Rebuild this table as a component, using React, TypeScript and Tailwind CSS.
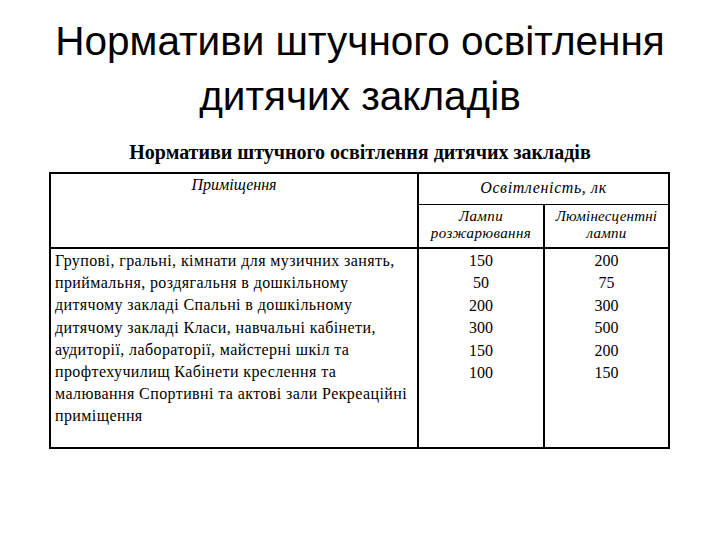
import React from 'react'

const rows = [
  ['150', '200'],
  ['50', '75'],
  ['200', '300'],
  ['300', '500'],
  ['150', '200'],
  ['100', '150'],
]

const lines = [
  'Групові, гральні, кімнати для музичних занять,',
  'приймальня, роздягальня в дошкільному',
  'дитячому закладі Спальні в дошкільному',
  'дитячому закладі Класи, навчальні кабінети,',
  'аудиторії, лабораторії, майстерні шкіл та',
  'профтехучилищ Кабінети креслення та',
  'малювання Спортивні та актові зали Рекреаційні',
  'приміщення',
]

export default function App() {
  return (
    <div className="relative h-[540px] w-[720px] overflow-hidden bg-white text-black">
      <h1 className="pt-[14px] text-center font-['Liberation_Sans',Arial,sans-serif] text-[40.5px] leading-[55px]">
        Нормативи штучного освітлення
        <br />
        дитячих закладів
      </h1>

      <div className="mt-[16px] text-center font-['Liberation_Serif','Times_New_Roman',serif] text-[20px] font-bold leading-[24px]">
        Нормативи штучного освітлення дитячих закладів
      </div>

      <div className="ml-[49px] mt-[8px] grid w-[621px] grid-cols-[368px_126px_1fr] grid-rows-[31px_42px_200px] border-2 border-black font-['Liberation_Serif','Times_New_Roman',serif] italic">
        <div className="row-span-2 border-r-2 border-black pt-[1px] text-center text-[16px] leading-[20px]">
          Приміщення
        </div>
        <div className="col-span-2 border-b border-black pt-[4px] text-center text-[16px] leading-[20px] tracking-[0.6px]">
          Освітленість, лк
        </div>
        <div className="border-r-2 border-black pt-[3px] text-center text-[15px] leading-[17px] tracking-[0.4px]">
          Лампи
          <br />
          розжарювання
        </div>
        <div className="pt-[3px] text-center text-[15px] leading-[17px] tracking-[0.2px]">
          Люмінесцентні
          <br />
          лампи
        </div>

        <div className="border-r-2 border-t-2 border-black pl-[4px] pt-[1px] text-[16px] not-italic leading-[22.2px] tracking-[0.4px] whitespace-nowrap">
          {lines.map((l, i) => (
            <div key={i}>{l}</div>
          ))}
        </div>
        <div className="flex flex-col items-center border-r-2 border-t-2 border-black pt-[1px] text-[16px] not-italic leading-[22.4px]">
          {rows.map((r, i) => (
            <span key={i}>{r[0]}</span>
          ))}
        </div>
        <div className="flex flex-col items-center border-t-2 border-black pt-[1px] text-[16px] not-italic leading-[22.4px]">
          {rows.map((r, i) => (
            <span key={i}>{r[1]}</span>
          ))}
        </div>
      </div>
    </div>
  )
}
